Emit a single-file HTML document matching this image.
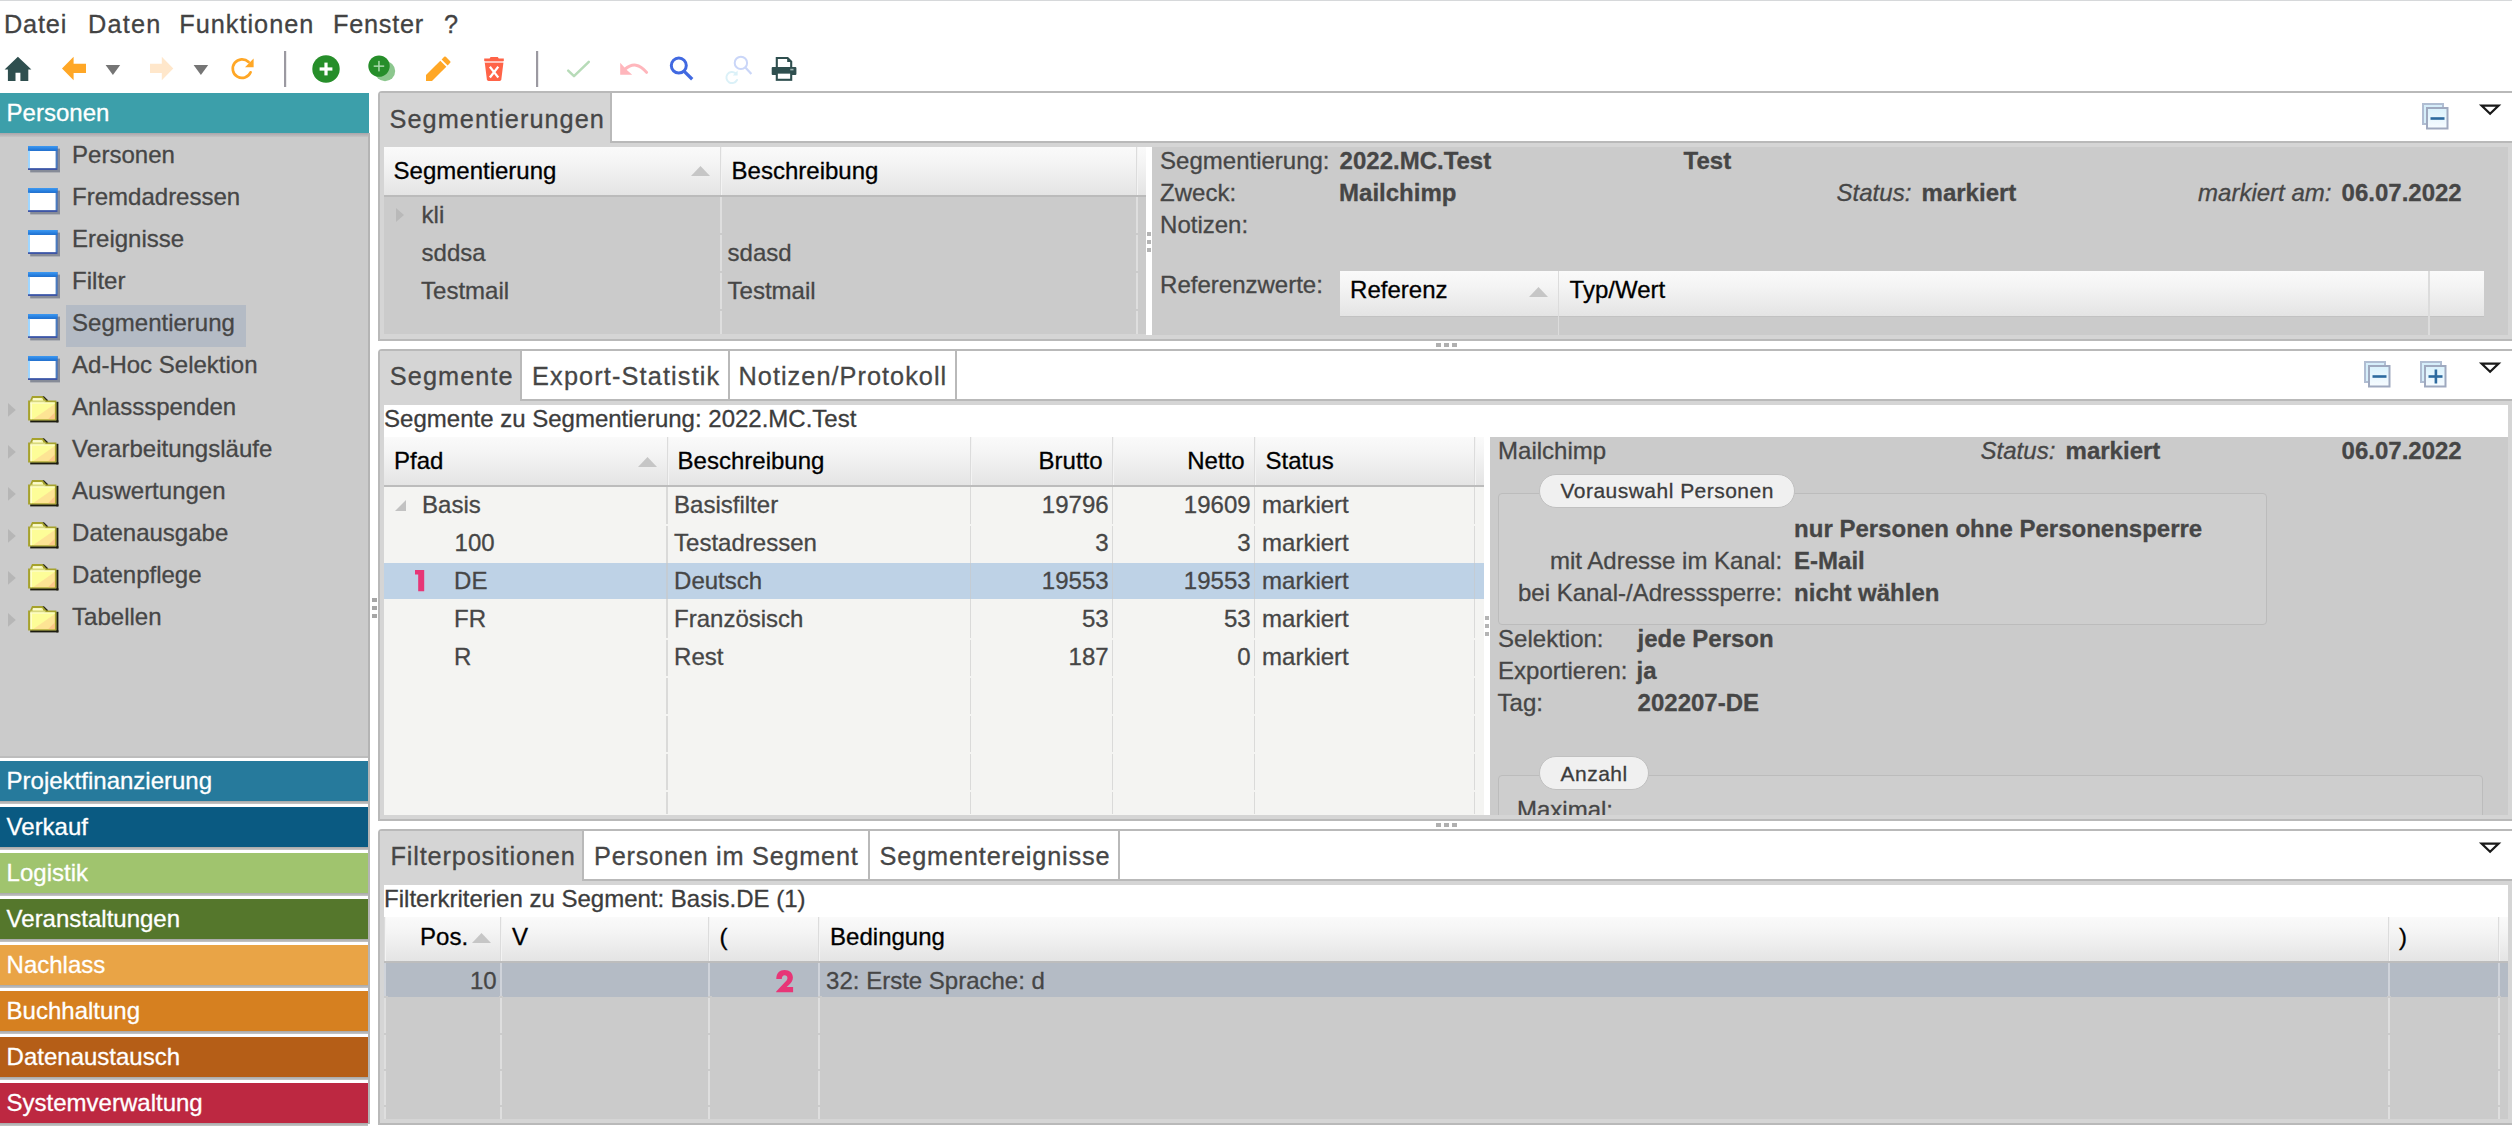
<!DOCTYPE html><html><head><meta charset="utf-8"><title>Segmentierung</title><style>
html,body{margin:0;padding:0;}
body{width:2512px;height:1131px;overflow:hidden;background:#fff;position:relative;font-family:"Liberation Sans",sans-serif;}
.t{position:absolute;white-space:pre;-webkit-text-stroke:0.3px currentColor;}
.r{position:absolute;}
svg{position:absolute;overflow:visible;}
.hd{background:linear-gradient(#fafafa 0%,#f4f4f4 35%,#e4e4e4 100%);}
</style></head><body>
<div class="r" style="left:0px;top:0px;width:2512px;height:1px;background:#d6d8da;"></div>
<span class="t" style="top:12.28px;font-size:25.3px;color:#434343;left:4.00px;letter-spacing:0.82px;line-height:25.3px;">Datei</span>
<span class="t" style="top:12.28px;font-size:25.3px;color:#434343;left:88.00px;letter-spacing:1.22px;line-height:25.3px;">Daten</span>
<span class="t" style="top:12.28px;font-size:25.3px;color:#434343;left:179.20px;letter-spacing:1.0px;line-height:25.3px;">Funktionen</span>
<span class="t" style="top:12.28px;font-size:25.3px;color:#434343;left:333.00px;letter-spacing:0.75px;line-height:25.3px;">Fenster</span>
<span class="t" style="top:12.28px;font-size:25.3px;color:#434343;left:444.00px;line-height:25.3px;">?</span>
<svg style="left:0;top:48px" width="820" height="44" viewBox="0 48 820 44">
<!-- home -->
<path d="M17.9 56.8 L31.4 69.4 L28.3 69.4 L28.3 81 L20.4 81 L20.4 72.8 L15.5 72.8 L15.5 81 L7.9 81 L7.9 69.4 L4.6 69.4 Z" fill="#2f4f4f"/>
<!-- back arrow -->
<path d="M62 68.4 L73.6 56.8 L73.6 63.8 L86 63.8 L86 72.9 L73.6 72.9 L73.6 80.2 Z" fill="#ffa726"/>
<path d="M105.6 65 L120.2 65 L112.9 75 Z" fill="#757575"/>
<!-- forward arrow (disabled) -->
<path d="M173.3 68.4 L161.8 56.8 L161.8 63.8 L150 63.8 L150 72.9 L161.8 72.9 L161.8 80.2 Z" fill="#ffe7cb"/>
<path d="M193.6 65 L208.2 65 L200.9 75 Z" fill="#757575"/>
<!-- refresh -->
<path d="M248.6 62.0 A9.3 9.3 0 1 0 250.6 72.3" fill="none" stroke="#ffa726" stroke-width="2.7" stroke-linecap="round"/>
<path d="M253.6 58.6 L253.6 67.2 L245.0 67.2 Z" fill="#ffa726"/>
<!-- separators -->
<rect x="284" y="51" width="2.2" height="36" fill="#9b99a1"/>
<rect x="536" y="51" width="2.2" height="36" fill="#9b99a1"/>
<!-- green plus -->
<circle cx="326" cy="69" r="13.7" fill="#268e2a"/>
<rect x="319.6" y="67.4" width="12.8" height="3.2" fill="#fff"/><rect x="324.4" y="62.6" width="3.2" height="12.8" fill="#fff"/>
<!-- green copy plus -->
<circle cx="385" cy="71.1" r="10.2" fill="#8cc78e"/>
<circle cx="379" cy="66.1" r="10.7" fill="#268e2a"/>
<rect x="373.7" y="65.4" width="10.5" height="1.5" fill="#a9d7ab"/><rect x="378.2" y="60.9" width="1.5" height="10.5" fill="#a9d7ab"/>
<!-- pencil -->
<path d="M426 81 L426 75 L440.3 60.7 L446.3 66.7 L432 81 Z" fill="#ffa726"/>
<path d="M441.6 59.4 L444.2 56.8 Q445 56 445.8 56.8 L450.2 61.2 Q451 62 450.2 62.8 L447.6 65.4 Z" fill="#ffa726"/>
<!-- trash -->
<path d="M490.6 56.9 L497.8 56.9 L498.8 58.6 L503.8 58.6 L503.8 61 L484.2 61 L484.2 58.6 L489.6 58.6 Z" fill="#ff6347"/>
<rect x="484.6" y="61" width="18.8" height="2.1" fill="#ffc4bb"/>
<path d="M484.8 63.1 L503.4 63.1 L501.3 79.6 Q501.1 81 499.7 81 L488.5 81 Q487.1 81 486.9 79.6 Z" fill="#ff6347"/>
<path d="M490.6 67.6 L497.6 76.6 M497.6 67.6 L490.6 76.6" stroke="#fff" stroke-width="2.3" stroke-linecap="square"/>
<!-- check -->
<path d="M568.2 70.6 L574 76.2 L588.8 61.9" fill="none" stroke="#b7dbb8" stroke-width="2.5" stroke-linecap="round" stroke-linejoin="round"/>
<!-- undo -->
<path d="M620.2 62.8 L620.2 74.8 L632.2 74.8 L626.8 70 Z" fill="#ffb6bc"/>
<path d="M625 69.2 Q636 59.5 646.6 72.4" fill="none" stroke="#ffb6bc" stroke-width="3" stroke-linecap="round"/>
<!-- search -->
<circle cx="678.8" cy="65.6" r="7.5" fill="none" stroke="#4169e1" stroke-width="3"/>
<path d="M684.2 71.4 L692.2 79.2" stroke="#4169e1" stroke-width="3.3" stroke-linecap="butt"/>
<!-- search refresh (disabled) -->
<circle cx="740.9" cy="62.9" r="6.2" fill="none" stroke="#cad6f8" stroke-width="2"/>
<path d="M745.4 67.6 L751.4 74" stroke="#cad6f8" stroke-width="2.2"/>
<path d="M735.6 73.2 A5.6 5.6 0 1 0 737 80" fill="none" stroke="#dbf1f8" stroke-width="2" stroke-linecap="round"/>
<path d="M737.6 70.6 L737.6 75.6 L732.8 75.6 Z" fill="#dbf1f8"/>
<!-- printer -->
<path d="M776.8 58 L787.6 58 L791.2 61.6 L791.2 68 L776.8 68 Z" fill="#fff" stroke="#2f4f4f" stroke-width="2.1"/>
<path d="M787.2 57.6 L787.2 62 L791.6 62 Z" fill="#2f4f4f"/>
<rect x="771.7" y="67.1" width="24.7" height="7.8" rx="1" fill="#2f4f4f"/>
<rect x="776.8" y="72.6" width="14.4" height="7.2" fill="#fff" stroke="#2f4f4f" stroke-width="2.1"/>
<rect x="790.3" y="68.8" width="3.2" height="1.6" fill="#9fb3b3"/>
</svg>

<div class="r" style="left:0px;top:93px;width:368.7px;height:40px;background:#3c9faa;"></div>
<div class="r" style="left:0px;top:133px;width:368px;height:4px;background:linear-gradient(#a9a5aa,#c4c4c4);"></div>
<div class="r" style="left:0px;top:137px;width:368px;height:619px;background:#cbcbcb;"></div>
<div class="r" style="left:0px;top:756px;width:368px;height:2px;background:#bdbdbd;"></div>
<div class="r" style="left:368px;top:133px;width:2px;height:991px;background:#b4b4b4;"></div>
<span class="t" style="top:100.88px;font-size:24px;color:#fff;left:6.60px;line-height:24px;">Personen</span>
<div class="r" style="left:66px;top:305px;width:180px;height:42px;background:#b4bbc5;"></div>
<span class="t" style="top:143.13px;font-size:24px;color:#464646;left:72.10px;line-height:24px;">Personen</span>
<svg style="left:28px;top:145.6px" width="33" height="27" viewBox="0 0 33 27"><defs><linearGradient id="wt" x1="0" y1="0" x2="0" y2="1"><stop offset="0" stop-color="#3e9af2"/><stop offset="1" stop-color="#1a6fd2"/></linearGradient></defs><rect x="2.2" y="2.6" width="29.8" height="23.8" fill="#5c6478" opacity="0.62"/><rect x="0" y="0" width="29.4" height="24" fill="#3f55a6"/><rect x="0" y="0" width="29.4" height="22.2" fill="#4a7cc0"/><rect x="0" y="0" width="29.4" height="4.8" fill="url(#wt)"/><rect x="0" y="4.8" width="2.1" height="17.4" fill="#9fd6ff"/><rect x="2" y="5" width="25.6" height="17.1" fill="#fff"/></svg>
<span class="t" style="top:185.13px;font-size:24px;color:#464646;left:72.10px;line-height:24px;">Fremdadressen</span>
<svg style="left:28px;top:187.6px" width="33" height="27" viewBox="0 0 33 27"><defs><linearGradient id="wt" x1="0" y1="0" x2="0" y2="1"><stop offset="0" stop-color="#3e9af2"/><stop offset="1" stop-color="#1a6fd2"/></linearGradient></defs><rect x="2.2" y="2.6" width="29.8" height="23.8" fill="#5c6478" opacity="0.62"/><rect x="0" y="0" width="29.4" height="24" fill="#3f55a6"/><rect x="0" y="0" width="29.4" height="22.2" fill="#4a7cc0"/><rect x="0" y="0" width="29.4" height="4.8" fill="url(#wt)"/><rect x="0" y="4.8" width="2.1" height="17.4" fill="#9fd6ff"/><rect x="2" y="5" width="25.6" height="17.1" fill="#fff"/></svg>
<span class="t" style="top:227.13px;font-size:24px;color:#464646;left:72.10px;line-height:24px;">Ereignisse</span>
<svg style="left:28px;top:229.6px" width="33" height="27" viewBox="0 0 33 27"><defs><linearGradient id="wt" x1="0" y1="0" x2="0" y2="1"><stop offset="0" stop-color="#3e9af2"/><stop offset="1" stop-color="#1a6fd2"/></linearGradient></defs><rect x="2.2" y="2.6" width="29.8" height="23.8" fill="#5c6478" opacity="0.62"/><rect x="0" y="0" width="29.4" height="24" fill="#3f55a6"/><rect x="0" y="0" width="29.4" height="22.2" fill="#4a7cc0"/><rect x="0" y="0" width="29.4" height="4.8" fill="url(#wt)"/><rect x="0" y="4.8" width="2.1" height="17.4" fill="#9fd6ff"/><rect x="2" y="5" width="25.6" height="17.1" fill="#fff"/></svg>
<span class="t" style="top:269.13px;font-size:24px;color:#464646;left:72.10px;line-height:24px;">Filter</span>
<svg style="left:28px;top:271.6px" width="33" height="27" viewBox="0 0 33 27"><defs><linearGradient id="wt" x1="0" y1="0" x2="0" y2="1"><stop offset="0" stop-color="#3e9af2"/><stop offset="1" stop-color="#1a6fd2"/></linearGradient></defs><rect x="2.2" y="2.6" width="29.8" height="23.8" fill="#5c6478" opacity="0.62"/><rect x="0" y="0" width="29.4" height="24" fill="#3f55a6"/><rect x="0" y="0" width="29.4" height="22.2" fill="#4a7cc0"/><rect x="0" y="0" width="29.4" height="4.8" fill="url(#wt)"/><rect x="0" y="4.8" width="2.1" height="17.4" fill="#9fd6ff"/><rect x="2" y="5" width="25.6" height="17.1" fill="#fff"/></svg>
<span class="t" style="top:311.13px;font-size:24px;color:#464646;left:72.10px;line-height:24px;">Segmentierung</span>
<svg style="left:28px;top:313.6px" width="33" height="27" viewBox="0 0 33 27"><defs><linearGradient id="wt" x1="0" y1="0" x2="0" y2="1"><stop offset="0" stop-color="#3e9af2"/><stop offset="1" stop-color="#1a6fd2"/></linearGradient></defs><rect x="2.2" y="2.6" width="29.8" height="23.8" fill="#5c6478" opacity="0.62"/><rect x="0" y="0" width="29.4" height="24" fill="#3f55a6"/><rect x="0" y="0" width="29.4" height="22.2" fill="#4a7cc0"/><rect x="0" y="0" width="29.4" height="4.8" fill="url(#wt)"/><rect x="0" y="4.8" width="2.1" height="17.4" fill="#9fd6ff"/><rect x="2" y="5" width="25.6" height="17.1" fill="#fff"/></svg>
<span class="t" style="top:353.13px;font-size:24px;color:#464646;left:72.10px;line-height:24px;">Ad-Hoc Selektion</span>
<svg style="left:28px;top:355.6px" width="33" height="27" viewBox="0 0 33 27"><defs><linearGradient id="wt" x1="0" y1="0" x2="0" y2="1"><stop offset="0" stop-color="#3e9af2"/><stop offset="1" stop-color="#1a6fd2"/></linearGradient></defs><rect x="2.2" y="2.6" width="29.8" height="23.8" fill="#5c6478" opacity="0.62"/><rect x="0" y="0" width="29.4" height="24" fill="#3f55a6"/><rect x="0" y="0" width="29.4" height="22.2" fill="#4a7cc0"/><rect x="0" y="0" width="29.4" height="4.8" fill="url(#wt)"/><rect x="0" y="4.8" width="2.1" height="17.4" fill="#9fd6ff"/><rect x="2" y="5" width="25.6" height="17.1" fill="#fff"/></svg>
<span class="t" style="top:395.13px;font-size:24px;color:#464646;left:72.10px;line-height:24px;">Anlassspenden</span>
<svg style="left:27.8px;top:395.6px" width="31" height="27" viewBox="0 0 31 27"><rect x="2.2" y="24.2" width="28.2" height="2.2" fill="#1c1c10"/><rect x="28.3" y="5.8" width="2.1" height="20.6" fill="#1c1c10"/><path d="M13.8 0.2 L16 0.2 L20.4 4.6 L17.6 5.8 Z" fill="#24241a"/><path d="M0.1 4.4 L2 4.4 L4 0 L14.4 0 L18.4 4.4 L28.4 4.4 L28.4 24.6 L0.1 24.6 Z" fill="#a6a22c"/><path d="M2.4 6.4 L4.4 6.4 L5.2 2 L14 2 L16.4 6.4 L26.8 6.4 L26.8 23.2 L2.4 23.2 Z" fill="#fdfd98"/><path d="M4.4 4.6 L5.2 2 L14 2 L15.4 4.6 Z" fill="#f4f4b4"/><rect x="4.6" y="2.6" width="8.6" height="1.2" fill="#fcfcd8"/><rect x="2.4" y="4.6" width="15" height="1.9" fill="#d8d880"/><rect x="2.4" y="6.4" width="1.4" height="16.8" fill="#ffffd6"/><rect x="2.4" y="6.4" width="24.4" height="1.2" fill="#fefed0"/><path d="M26.8 8 L26.8 23.2 L5 23.2 Z" fill="#fdc090" opacity="0.42"/><path d="M26.8 16.5 L26.8 23.2 L20 23.2 Z" fill="#fdb080" opacity="0.55"/></svg>
<svg style="left:8px;top:403px" width="8" height="14" viewBox="0 0 8 14"><path d="M0 0 L7.8 6.9 L0 13.8 Z" fill="#b6b6b6"/></svg>
<span class="t" style="top:437.13px;font-size:24px;color:#464646;left:72.10px;line-height:24px;">Verarbeitungsläufe</span>
<svg style="left:27.8px;top:437.6px" width="31" height="27" viewBox="0 0 31 27"><rect x="2.2" y="24.2" width="28.2" height="2.2" fill="#1c1c10"/><rect x="28.3" y="5.8" width="2.1" height="20.6" fill="#1c1c10"/><path d="M13.8 0.2 L16 0.2 L20.4 4.6 L17.6 5.8 Z" fill="#24241a"/><path d="M0.1 4.4 L2 4.4 L4 0 L14.4 0 L18.4 4.4 L28.4 4.4 L28.4 24.6 L0.1 24.6 Z" fill="#a6a22c"/><path d="M2.4 6.4 L4.4 6.4 L5.2 2 L14 2 L16.4 6.4 L26.8 6.4 L26.8 23.2 L2.4 23.2 Z" fill="#fdfd98"/><path d="M4.4 4.6 L5.2 2 L14 2 L15.4 4.6 Z" fill="#f4f4b4"/><rect x="4.6" y="2.6" width="8.6" height="1.2" fill="#fcfcd8"/><rect x="2.4" y="4.6" width="15" height="1.9" fill="#d8d880"/><rect x="2.4" y="6.4" width="1.4" height="16.8" fill="#ffffd6"/><rect x="2.4" y="6.4" width="24.4" height="1.2" fill="#fefed0"/><path d="M26.8 8 L26.8 23.2 L5 23.2 Z" fill="#fdc090" opacity="0.42"/><path d="M26.8 16.5 L26.8 23.2 L20 23.2 Z" fill="#fdb080" opacity="0.55"/></svg>
<svg style="left:8px;top:445px" width="8" height="14" viewBox="0 0 8 14"><path d="M0 0 L7.8 6.9 L0 13.8 Z" fill="#b6b6b6"/></svg>
<span class="t" style="top:479.13px;font-size:24px;color:#464646;left:72.10px;line-height:24px;">Auswertungen</span>
<svg style="left:27.8px;top:479.6px" width="31" height="27" viewBox="0 0 31 27"><rect x="2.2" y="24.2" width="28.2" height="2.2" fill="#1c1c10"/><rect x="28.3" y="5.8" width="2.1" height="20.6" fill="#1c1c10"/><path d="M13.8 0.2 L16 0.2 L20.4 4.6 L17.6 5.8 Z" fill="#24241a"/><path d="M0.1 4.4 L2 4.4 L4 0 L14.4 0 L18.4 4.4 L28.4 4.4 L28.4 24.6 L0.1 24.6 Z" fill="#a6a22c"/><path d="M2.4 6.4 L4.4 6.4 L5.2 2 L14 2 L16.4 6.4 L26.8 6.4 L26.8 23.2 L2.4 23.2 Z" fill="#fdfd98"/><path d="M4.4 4.6 L5.2 2 L14 2 L15.4 4.6 Z" fill="#f4f4b4"/><rect x="4.6" y="2.6" width="8.6" height="1.2" fill="#fcfcd8"/><rect x="2.4" y="4.6" width="15" height="1.9" fill="#d8d880"/><rect x="2.4" y="6.4" width="1.4" height="16.8" fill="#ffffd6"/><rect x="2.4" y="6.4" width="24.4" height="1.2" fill="#fefed0"/><path d="M26.8 8 L26.8 23.2 L5 23.2 Z" fill="#fdc090" opacity="0.42"/><path d="M26.8 16.5 L26.8 23.2 L20 23.2 Z" fill="#fdb080" opacity="0.55"/></svg>
<svg style="left:8px;top:487px" width="8" height="14" viewBox="0 0 8 14"><path d="M0 0 L7.8 6.9 L0 13.8 Z" fill="#b6b6b6"/></svg>
<span class="t" style="top:521.13px;font-size:24px;color:#464646;left:72.10px;line-height:24px;">Datenausgabe</span>
<svg style="left:27.8px;top:521.6px" width="31" height="27" viewBox="0 0 31 27"><rect x="2.2" y="24.2" width="28.2" height="2.2" fill="#1c1c10"/><rect x="28.3" y="5.8" width="2.1" height="20.6" fill="#1c1c10"/><path d="M13.8 0.2 L16 0.2 L20.4 4.6 L17.6 5.8 Z" fill="#24241a"/><path d="M0.1 4.4 L2 4.4 L4 0 L14.4 0 L18.4 4.4 L28.4 4.4 L28.4 24.6 L0.1 24.6 Z" fill="#a6a22c"/><path d="M2.4 6.4 L4.4 6.4 L5.2 2 L14 2 L16.4 6.4 L26.8 6.4 L26.8 23.2 L2.4 23.2 Z" fill="#fdfd98"/><path d="M4.4 4.6 L5.2 2 L14 2 L15.4 4.6 Z" fill="#f4f4b4"/><rect x="4.6" y="2.6" width="8.6" height="1.2" fill="#fcfcd8"/><rect x="2.4" y="4.6" width="15" height="1.9" fill="#d8d880"/><rect x="2.4" y="6.4" width="1.4" height="16.8" fill="#ffffd6"/><rect x="2.4" y="6.4" width="24.4" height="1.2" fill="#fefed0"/><path d="M26.8 8 L26.8 23.2 L5 23.2 Z" fill="#fdc090" opacity="0.42"/><path d="M26.8 16.5 L26.8 23.2 L20 23.2 Z" fill="#fdb080" opacity="0.55"/></svg>
<svg style="left:8px;top:529px" width="8" height="14" viewBox="0 0 8 14"><path d="M0 0 L7.8 6.9 L0 13.8 Z" fill="#b6b6b6"/></svg>
<span class="t" style="top:563.13px;font-size:24px;color:#464646;left:72.10px;line-height:24px;">Datenpflege</span>
<svg style="left:27.8px;top:563.6px" width="31" height="27" viewBox="0 0 31 27"><rect x="2.2" y="24.2" width="28.2" height="2.2" fill="#1c1c10"/><rect x="28.3" y="5.8" width="2.1" height="20.6" fill="#1c1c10"/><path d="M13.8 0.2 L16 0.2 L20.4 4.6 L17.6 5.8 Z" fill="#24241a"/><path d="M0.1 4.4 L2 4.4 L4 0 L14.4 0 L18.4 4.4 L28.4 4.4 L28.4 24.6 L0.1 24.6 Z" fill="#a6a22c"/><path d="M2.4 6.4 L4.4 6.4 L5.2 2 L14 2 L16.4 6.4 L26.8 6.4 L26.8 23.2 L2.4 23.2 Z" fill="#fdfd98"/><path d="M4.4 4.6 L5.2 2 L14 2 L15.4 4.6 Z" fill="#f4f4b4"/><rect x="4.6" y="2.6" width="8.6" height="1.2" fill="#fcfcd8"/><rect x="2.4" y="4.6" width="15" height="1.9" fill="#d8d880"/><rect x="2.4" y="6.4" width="1.4" height="16.8" fill="#ffffd6"/><rect x="2.4" y="6.4" width="24.4" height="1.2" fill="#fefed0"/><path d="M26.8 8 L26.8 23.2 L5 23.2 Z" fill="#fdc090" opacity="0.42"/><path d="M26.8 16.5 L26.8 23.2 L20 23.2 Z" fill="#fdb080" opacity="0.55"/></svg>
<svg style="left:8px;top:571px" width="8" height="14" viewBox="0 0 8 14"><path d="M0 0 L7.8 6.9 L0 13.8 Z" fill="#b6b6b6"/></svg>
<span class="t" style="top:605.13px;font-size:24px;color:#464646;left:72.10px;line-height:24px;">Tabellen</span>
<svg style="left:27.8px;top:605.6px" width="31" height="27" viewBox="0 0 31 27"><rect x="2.2" y="24.2" width="28.2" height="2.2" fill="#1c1c10"/><rect x="28.3" y="5.8" width="2.1" height="20.6" fill="#1c1c10"/><path d="M13.8 0.2 L16 0.2 L20.4 4.6 L17.6 5.8 Z" fill="#24241a"/><path d="M0.1 4.4 L2 4.4 L4 0 L14.4 0 L18.4 4.4 L28.4 4.4 L28.4 24.6 L0.1 24.6 Z" fill="#a6a22c"/><path d="M2.4 6.4 L4.4 6.4 L5.2 2 L14 2 L16.4 6.4 L26.8 6.4 L26.8 23.2 L2.4 23.2 Z" fill="#fdfd98"/><path d="M4.4 4.6 L5.2 2 L14 2 L15.4 4.6 Z" fill="#f4f4b4"/><rect x="4.6" y="2.6" width="8.6" height="1.2" fill="#fcfcd8"/><rect x="2.4" y="4.6" width="15" height="1.9" fill="#d8d880"/><rect x="2.4" y="6.4" width="1.4" height="16.8" fill="#ffffd6"/><rect x="2.4" y="6.4" width="24.4" height="1.2" fill="#fefed0"/><path d="M26.8 8 L26.8 23.2 L5 23.2 Z" fill="#fdc090" opacity="0.42"/><path d="M26.8 16.5 L26.8 23.2 L20 23.2 Z" fill="#fdb080" opacity="0.55"/></svg>
<svg style="left:8px;top:613px" width="8" height="14" viewBox="0 0 8 14"><path d="M0 0 L7.8 6.9 L0 13.8 Z" fill="#b6b6b6"/></svg>
<div class="r" style="left:0px;top:761px;width:368px;height:40px;background:#267a9c;"></div>
<div class="r" style="left:0px;top:801px;width:368px;height:3px;background:linear-gradient(#a8a8a8,#c6c6c6);"></div>
<span class="t" style="top:769.18px;font-size:24px;color:#fff;left:6.60px;line-height:24px;">Projektfinanzierung</span>
<div class="r" style="left:0px;top:807px;width:368px;height:40px;background:#0a5a82;"></div>
<div class="r" style="left:0px;top:847px;width:368px;height:3px;background:linear-gradient(#a8a8a8,#c6c6c6);"></div>
<span class="t" style="top:815.18px;font-size:24px;color:#fff;left:6.60px;line-height:24px;">Verkauf</span>
<div class="r" style="left:0px;top:853px;width:368px;height:40px;background:#a0c46e;"></div>
<div class="r" style="left:0px;top:893px;width:368px;height:3px;background:linear-gradient(#a8a8a8,#c6c6c6);"></div>
<span class="t" style="top:861.18px;font-size:24px;color:#fff;left:6.60px;line-height:24px;">Logistik</span>
<div class="r" style="left:0px;top:899px;width:368px;height:40px;background:#55772c;"></div>
<div class="r" style="left:0px;top:939px;width:368px;height:3px;background:linear-gradient(#a8a8a8,#c6c6c6);"></div>
<span class="t" style="top:907.18px;font-size:24px;color:#fff;left:6.60px;line-height:24px;">Veranstaltungen</span>
<div class="r" style="left:0px;top:945px;width:368px;height:40px;background:#e9a446;"></div>
<div class="r" style="left:0px;top:985px;width:368px;height:3px;background:linear-gradient(#a8a8a8,#c6c6c6);"></div>
<span class="t" style="top:953.18px;font-size:24px;color:#fff;left:6.60px;line-height:24px;">Nachlass</span>
<div class="r" style="left:0px;top:991px;width:368px;height:40px;background:#d68020;"></div>
<div class="r" style="left:0px;top:1031px;width:368px;height:3px;background:linear-gradient(#a8a8a8,#c6c6c6);"></div>
<span class="t" style="top:999.18px;font-size:24px;color:#fff;left:6.60px;line-height:24px;">Buchhaltung</span>
<div class="r" style="left:0px;top:1037px;width:368px;height:40px;background:#b55e17;"></div>
<div class="r" style="left:0px;top:1077px;width:368px;height:3px;background:linear-gradient(#a8a8a8,#c6c6c6);"></div>
<span class="t" style="top:1045.18px;font-size:24px;color:#fff;left:6.60px;line-height:24px;">Datenaustausch</span>
<div class="r" style="left:0px;top:1083px;width:368px;height:40px;background:#bd2841;"></div>
<div class="r" style="left:0px;top:1123px;width:368px;height:3px;background:linear-gradient(#a8a8a8,#c6c6c6);"></div>
<span class="t" style="top:1091.18px;font-size:24px;color:#fff;left:6.60px;line-height:24px;">Systemverwaltung</span>
<div class="r" style="left:371.5px;top:598px;width:5px;height:4px;background:#a6a6a6;"></div>
<div class="r" style="left:371.5px;top:606px;width:5px;height:4px;background:#a6a6a6;"></div>
<div class="r" style="left:371.5px;top:614px;width:5px;height:4px;background:#a6a6a6;"></div>
<div class="r" style="left:378px;top:91px;width:2140px;height:246px;border:2px solid #b9b9b9;border-radius:4px 0 0 0;background:#d5d5d5;"></div>
<div class="r" style="left:380px;top:93px;width:231px;height:50px;background:#d5d5d5;"></div>
<div class="r" style="left:609.5px;top:93px;width:2px;height:50px;background:#b9b9b9;"></div>
<span class="t" style="top:106.78px;font-size:25.3px;color:#464646;left:389.60px;letter-spacing:1.043px;line-height:25.3px;">Segmentierungen</span>
<div class="r" style="left:611.5px;top:93px;width:1900.5px;height:48px;background:#fff;"></div>
<div class="r" style="left:609.5px;top:141px;width:1902.5px;height:2px;background:#b9b9b9;"></div>
<div class="r" style="left:378px;top:349px;width:2140px;height:468px;border:2px solid #b9b9b9;border-radius:4px 0 0 0;background:#d5d5d5;"></div>
<div class="r" style="left:380px;top:351px;width:141.5px;height:50px;background:#d5d5d5;"></div>
<div class="r" style="left:520.0px;top:351px;width:2px;height:50px;background:#b9b9b9;"></div>
<span class="t" style="top:364.03px;font-size:25.3px;color:#464646;left:389.80px;letter-spacing:1.079px;line-height:25.3px;">Segmente</span>
<div class="r" style="left:522.0px;top:351px;width:207.5px;height:48px;background:#fff;"></div>
<div class="r" style="left:728.0px;top:351px;width:2px;height:48px;background:#b9b9b9;"></div>
<span class="t" style="top:364.03px;font-size:25.3px;color:#464646;left:532.10px;letter-spacing:1.133px;line-height:25.3px;">Export-Statistik</span>
<div class="r" style="left:730.0px;top:351px;width:226.5px;height:48px;background:#fff;"></div>
<div class="r" style="left:955.0px;top:351px;width:2px;height:48px;background:#b9b9b9;"></div>
<span class="t" style="top:364.03px;font-size:25.3px;color:#464646;left:738.50px;letter-spacing:1.03px;line-height:25.3px;">Notizen/Protokoll</span>
<div class="r" style="left:957.0px;top:351px;width:1555.0px;height:48px;background:#fff;"></div>
<div class="r" style="left:520.0px;top:399px;width:1992.0px;height:2px;background:#b9b9b9;"></div>
<div class="r" style="left:378px;top:829px;width:2140px;height:291.5px;border:2px solid #b9b9b9;border-radius:4px 0 0 0;background:#d5d5d5;"></div>
<div class="r" style="left:380px;top:831px;width:203.5px;height:50px;background:#d5d5d5;"></div>
<div class="r" style="left:582.0px;top:831px;width:2px;height:50px;background:#b9b9b9;"></div>
<span class="t" style="top:844.03px;font-size:25.3px;color:#464646;left:390.40px;letter-spacing:0.86px;line-height:25.3px;">Filterpositionen</span>
<div class="r" style="left:584.0px;top:831px;width:285.5px;height:48px;background:#fff;"></div>
<div class="r" style="left:868.0px;top:831px;width:2px;height:48px;background:#b9b9b9;"></div>
<span class="t" style="top:844.03px;font-size:25.3px;color:#464646;left:594.10px;letter-spacing:0.744px;line-height:25.3px;">Personen im Segment</span>
<div class="r" style="left:870.0px;top:831px;width:249.5px;height:48px;background:#fff;"></div>
<div class="r" style="left:1118.0px;top:831px;width:2px;height:48px;background:#b9b9b9;"></div>
<span class="t" style="top:844.03px;font-size:25.3px;color:#464646;left:879.50px;letter-spacing:0.85px;line-height:25.3px;">Segmentereignisse</span>
<div class="r" style="left:1120.0px;top:831px;width:1392.0px;height:48px;background:#fff;"></div>
<div class="r" style="left:582.0px;top:879px;width:1930.0px;height:2px;background:#b9b9b9;"></div>
<div class="r" style="left:1436px;top:343px;width:5px;height:4px;background:#b0b0b0;"></div>
<div class="r" style="left:1444px;top:343px;width:5px;height:4px;background:#b0b0b0;"></div>
<div class="r" style="left:1452px;top:343px;width:5px;height:4px;background:#b0b0b0;"></div>
<div class="r" style="left:1436px;top:823px;width:5px;height:4px;background:#b0b0b0;"></div>
<div class="r" style="left:1444px;top:823px;width:5px;height:4px;background:#b0b0b0;"></div>
<div class="r" style="left:1452px;top:823px;width:5px;height:4px;background:#b0b0b0;"></div>
<svg style="left:2479px;top:104px" width="22" height="13" viewBox="0 0 22 13"><path d="M2.6 1.6 L19.6 1.6 L11.1 9.8 Z" fill="none" stroke="#1a1a1a" stroke-width="2.2" stroke-linejoin="miter"/></svg>
<svg style="left:2421.5px;top:102.5px" width="27" height="27" viewBox="0 0 27 27"><defs><linearGradient id="g2421.5102.5" x1="0" y1="0" x2="0" y2="1"><stop offset="0" stop-color="#d9f1fc"/><stop offset="1" stop-color="#f7fcff"/></linearGradient></defs><rect x="1" y="1" width="20" height="20" fill="#d6eefa" stroke="#b0bdd2" stroke-width="2"/><rect x="5" y="5" width="20.5" height="20.5" fill="url(#g2421.5102.5)" stroke="#9fa9bf" stroke-width="2"/><rect x="8.5" y="14.2" width="14" height="2.6" fill="#2d6a9f"/></svg>
<svg style="left:2479px;top:362px" width="22" height="13" viewBox="0 0 22 13"><path d="M2.6 1.6 L19.6 1.6 L11.1 9.8 Z" fill="none" stroke="#1a1a1a" stroke-width="2.2" stroke-linejoin="miter"/></svg>
<svg style="left:2363.5px;top:360.5px" width="27" height="27" viewBox="0 0 27 27"><defs><linearGradient id="g2363.5360.5" x1="0" y1="0" x2="0" y2="1"><stop offset="0" stop-color="#d9f1fc"/><stop offset="1" stop-color="#f7fcff"/></linearGradient></defs><rect x="1" y="1" width="20" height="20" fill="#d6eefa" stroke="#b0bdd2" stroke-width="2"/><rect x="5" y="5" width="20.5" height="20.5" fill="url(#g2363.5360.5)" stroke="#9fa9bf" stroke-width="2"/><rect x="8.5" y="14.2" width="14" height="2.6" fill="#2d6a9f"/></svg>
<svg style="left:2419.5px;top:360.5px" width="27" height="27" viewBox="0 0 27 27"><defs><linearGradient id="g2419.5360.5" x1="0" y1="0" x2="0" y2="1"><stop offset="0" stop-color="#d9f1fc"/><stop offset="1" stop-color="#f7fcff"/></linearGradient></defs><rect x="1" y="1" width="20" height="20" fill="#d6eefa" stroke="#b0bdd2" stroke-width="2"/><rect x="5" y="5" width="20.5" height="20.5" fill="url(#g2419.5360.5)" stroke="#9fa9bf" stroke-width="2"/><rect x="8.5" y="14.2" width="14" height="2.6" fill="#2d6a9f"/><rect x="14.6" y="8.5" width="2.6" height="14" fill="#2d6a9f"/></svg>
<svg style="left:2479px;top:842px" width="22" height="13" viewBox="0 0 22 13"><path d="M2.6 1.6 L19.6 1.6 L11.1 9.8 Z" fill="none" stroke="#1a1a1a" stroke-width="2.2" stroke-linejoin="miter"/></svg>
<div class="r" style="left:384px;top:147px;width:762px;height:48px;background:;background:linear-gradient(#fafafa 0%,#f4f4f4 35%,#e4e4e4 100%)"></div>
<div class="r" style="left:384px;top:194.7px;width:762px;height:2.2px;background:#bbbbbb;"></div>
<div class="r" style="left:384px;top:196.9px;width:762px;height:137.6px;background:#cbcbcb;"></div>
<div class="r" style="left:720px;top:196.9px;width:2px;height:137.6px;background:#dedede;"></div>
<div class="r" style="left:720px;top:147px;width:1px;height:47.7px;background:#dcdcdc;"></div>
<div class="r" style="left:721px;top:147px;width:1px;height:47.7px;background:#f3f3f3;"></div>
<div class="r" style="left:1136px;top:196.9px;width:2px;height:137.6px;background:#dedede;"></div>
<div class="r" style="left:1136px;top:147px;width:1px;height:47.7px;background:#dcdcdc;"></div>
<div class="r" style="left:1137px;top:147px;width:1px;height:47.7px;background:#f3f3f3;"></div>
<div class="r" style="left:719px;top:233px;width:4px;height:2px;background:#cbcbcb;"></div>
<div class="r" style="left:1135px;top:233px;width:4px;height:2px;background:#cbcbcb;"></div>
<div class="r" style="left:719px;top:271px;width:4px;height:2px;background:#cbcbcb;"></div>
<div class="r" style="left:1135px;top:271px;width:4px;height:2px;background:#cbcbcb;"></div>
<div class="r" style="left:719px;top:309px;width:4px;height:2px;background:#cbcbcb;"></div>
<div class="r" style="left:1135px;top:309px;width:4px;height:2px;background:#cbcbcb;"></div>
<span class="t" style="top:159.13px;font-size:24px;color:#000;left:393.60px;line-height:24px;">Segmentierung</span>
<span class="t" style="top:159.13px;font-size:24px;color:#000;left:731.60px;line-height:24px;">Beschreibung</span>
<svg style="left:691px;top:166px" width="19" height="10" viewBox="0 0 19 10"><path d="M0 10 L9.5 0 L19 10 Z" fill="#c6c6c6"/></svg>
<svg style="left:396px;top:208px" width="8" height="14" viewBox="0 0 8 14"><path d="M0 0 L8 7 L0 14 Z" fill="#b9b9b9"/></svg>
<span class="t" style="top:202.88px;font-size:24px;color:#464646;left:421.60px;line-height:24px;">kli</span>
<span class="t" style="top:240.88px;font-size:24px;color:#464646;left:421.60px;line-height:24px;">sddsa</span>
<span class="t" style="top:278.88px;font-size:24px;color:#464646;left:421.10px;line-height:24px;">Testmail</span>
<span class="t" style="top:240.88px;font-size:24px;color:#464646;left:727.60px;line-height:24px;">sdasd</span>
<span class="t" style="top:278.88px;font-size:24px;color:#464646;left:727.60px;line-height:24px;">Testmail</span>
<div class="r" style="left:1146px;top:147px;width:6px;height:187.5px;background:#fff;"></div>
<div class="r" style="left:1147px;top:232px;width:4px;height:4px;background:#b4b4b4;"></div>
<div class="r" style="left:1147px;top:240px;width:4px;height:4px;background:#b4b4b4;"></div>
<div class="r" style="left:1147px;top:248px;width:4px;height:4px;background:#b4b4b4;"></div>
<div class="r" style="left:1152px;top:147px;width:1356px;height:187.5px;background:#cbcbcb;"></div>
<span class="t" style="top:149.13px;font-size:24px;color:#464646;left:1160.10px;line-height:24px;">Segmentierung:</span>
<span class="t" style="top:180.88px;font-size:24px;color:#464646;left:1160.10px;line-height:24px;">Zweck:</span>
<span class="t" style="top:212.88px;font-size:24px;color:#464646;left:1160.10px;line-height:24px;">Notizen:</span>
<span class="t" style="top:272.88px;font-size:24px;color:#464646;left:1160.10px;line-height:24px;">Referenzwerte:</span>
<span class="t" style="top:149.13px;font-size:24px;color:#464646;left:1339.60px;font-weight:700;line-height:24px;">2022.MC.Test</span>
<span class="t" style="top:149.13px;font-size:24px;color:#464646;left:1683.60px;font-weight:700;line-height:24px;">Test</span>
<span class="t" style="top:180.88px;font-size:24px;color:#464646;left:1339.10px;font-weight:700;line-height:24px;">Mailchimp</span>
<span class="t" style="top:180.88px;font-size:24px;color:#464646;left:1836.60px;font-style:italic;line-height:24px;">Status:</span>
<span class="t" style="top:180.88px;font-size:24px;color:#464646;left:1921.60px;font-weight:700;line-height:24px;">markiert</span>
<span class="t" style="top:180.88px;font-size:24px;color:#464646;left:2198.10px;font-style:italic;line-height:24px;">markiert am:</span>
<span class="t" style="top:180.88px;font-size:24px;color:#464646;left:2341.60px;font-weight:700;line-height:24px;">06.07.2022</span>
<div class="r" style="left:1339.5px;top:271px;width:1144px;height:44.5px;background:;background:linear-gradient(#fafafa 0%,#f4f4f4 35%,#e4e4e4 100%)"></div>
<div class="r" style="left:1339.5px;top:315.5px;width:1144px;height:1.5px;background:#c2c2c2;"></div>
<div class="r" style="left:1557.5px;top:271px;width:1.5px;height:63.5px;background:#dcdcdc;"></div>
<div class="r" style="left:2428px;top:271px;width:1.5px;height:63.5px;background:#dcdcdc;"></div>
<span class="t" style="top:278.38px;font-size:24px;color:#000;left:1350.10px;line-height:24px;">Referenz</span>
<span class="t" style="top:278.38px;font-size:24px;color:#000;left:1569.60px;line-height:24px;">Typ/Wert</span>
<svg style="left:1529px;top:287px" width="19" height="10" viewBox="0 0 19 10"><path d="M0 10 L9.5 0 L19 10 Z" fill="#c6c6c6"/></svg>
<div class="r" style="left:384px;top:405px;width:2124px;height:32px;background:#fff;"></div>
<span class="t" style="top:406.98px;font-size:24px;color:#3c3c3c;left:384.10px;line-height:24px;">Segmente zu Segmentierung: 2022.MC.Test</span>
<div class="r" style="left:384px;top:437px;width:1100px;height:48px;background:;background:linear-gradient(#fafafa 0%,#f4f4f4 35%,#e4e4e4 100%)"></div>
<div class="r" style="left:384px;top:484.6px;width:1100px;height:2.1px;background:#bcbcbc;"></div>
<div class="r" style="left:384px;top:486.5px;width:1100px;height:328px;background:#f4f4f2;"></div>
<div class="r" style="left:384px;top:563px;width:1100px;height:36px;background:#bed2e6;"></div>
<div class="r" style="left:666.3px;top:486.7px;width:1.6px;height:327.8px;background:rgba(200,200,200,.6);"></div>
<div class="r" style="left:666.5px;top:437px;width:1px;height:47.6px;background:#dcdcdc;"></div>
<div class="r" style="left:667.5px;top:437px;width:1px;height:47.6px;background:#f3f3f3;"></div>
<div class="r" style="left:969.8px;top:486.7px;width:1.6px;height:327.8px;background:rgba(200,200,200,.6);"></div>
<div class="r" style="left:970px;top:437px;width:1px;height:47.6px;background:#dcdcdc;"></div>
<div class="r" style="left:971px;top:437px;width:1px;height:47.6px;background:#f3f3f3;"></div>
<div class="r" style="left:1111.8px;top:486.7px;width:1.6px;height:327.8px;background:rgba(200,200,200,.6);"></div>
<div class="r" style="left:1112px;top:437px;width:1px;height:47.6px;background:#dcdcdc;"></div>
<div class="r" style="left:1113px;top:437px;width:1px;height:47.6px;background:#f3f3f3;"></div>
<div class="r" style="left:1253.8px;top:486.7px;width:1.6px;height:327.8px;background:rgba(200,200,200,.6);"></div>
<div class="r" style="left:1254px;top:437px;width:1px;height:47.6px;background:#dcdcdc;"></div>
<div class="r" style="left:1255px;top:437px;width:1px;height:47.6px;background:#f3f3f3;"></div>
<div class="r" style="left:1473.8px;top:486.7px;width:1.6px;height:327.8px;background:rgba(200,200,200,.6);"></div>
<div class="r" style="left:1474px;top:437px;width:1px;height:47.6px;background:#dcdcdc;"></div>
<div class="r" style="left:1475px;top:437px;width:1px;height:47.6px;background:#f3f3f3;"></div>
<div class="r" style="left:665.5px;top:523.5px;width:4px;height:2px;background:#f4f4f2;"></div>
<div class="r" style="left:969px;top:523.5px;width:4px;height:2px;background:#f4f4f2;"></div>
<div class="r" style="left:1111px;top:523.5px;width:4px;height:2px;background:#f4f4f2;"></div>
<div class="r" style="left:1253px;top:523.5px;width:4px;height:2px;background:#f4f4f2;"></div>
<div class="r" style="left:1473px;top:523.5px;width:4px;height:2px;background:#f4f4f2;"></div>
<div class="r" style="left:665.5px;top:637.5px;width:4px;height:2px;background:#f4f4f2;"></div>
<div class="r" style="left:969px;top:637.5px;width:4px;height:2px;background:#f4f4f2;"></div>
<div class="r" style="left:1111px;top:637.5px;width:4px;height:2px;background:#f4f4f2;"></div>
<div class="r" style="left:1253px;top:637.5px;width:4px;height:2px;background:#f4f4f2;"></div>
<div class="r" style="left:1473px;top:637.5px;width:4px;height:2px;background:#f4f4f2;"></div>
<div class="r" style="left:665.5px;top:675.5px;width:4px;height:2px;background:#f4f4f2;"></div>
<div class="r" style="left:969px;top:675.5px;width:4px;height:2px;background:#f4f4f2;"></div>
<div class="r" style="left:1111px;top:675.5px;width:4px;height:2px;background:#f4f4f2;"></div>
<div class="r" style="left:1253px;top:675.5px;width:4px;height:2px;background:#f4f4f2;"></div>
<div class="r" style="left:1473px;top:675.5px;width:4px;height:2px;background:#f4f4f2;"></div>
<div class="r" style="left:665.5px;top:713.5px;width:4px;height:2px;background:#f4f4f2;"></div>
<div class="r" style="left:969px;top:713.5px;width:4px;height:2px;background:#f4f4f2;"></div>
<div class="r" style="left:1111px;top:713.5px;width:4px;height:2px;background:#f4f4f2;"></div>
<div class="r" style="left:1253px;top:713.5px;width:4px;height:2px;background:#f4f4f2;"></div>
<div class="r" style="left:1473px;top:713.5px;width:4px;height:2px;background:#f4f4f2;"></div>
<div class="r" style="left:665.5px;top:751.5px;width:4px;height:2px;background:#f4f4f2;"></div>
<div class="r" style="left:969px;top:751.5px;width:4px;height:2px;background:#f4f4f2;"></div>
<div class="r" style="left:1111px;top:751.5px;width:4px;height:2px;background:#f4f4f2;"></div>
<div class="r" style="left:1253px;top:751.5px;width:4px;height:2px;background:#f4f4f2;"></div>
<div class="r" style="left:1473px;top:751.5px;width:4px;height:2px;background:#f4f4f2;"></div>
<div class="r" style="left:665.5px;top:789.5px;width:4px;height:2px;background:#f4f4f2;"></div>
<div class="r" style="left:969px;top:789.5px;width:4px;height:2px;background:#f4f4f2;"></div>
<div class="r" style="left:1111px;top:789.5px;width:4px;height:2px;background:#f4f4f2;"></div>
<div class="r" style="left:1253px;top:789.5px;width:4px;height:2px;background:#f4f4f2;"></div>
<div class="r" style="left:1473px;top:789.5px;width:4px;height:2px;background:#f4f4f2;"></div>
<span class="t" style="top:449.13px;font-size:24px;color:#000;left:394.10px;line-height:24px;">Pfad</span>
<span class="t" style="top:449.13px;font-size:24px;color:#000;left:677.60px;line-height:24px;">Beschreibung</span>
<span class="t" style="top:449.13px;font-size:24px;color:#000;right:1409.40px;line-height:24px;">Brutto</span>
<span class="t" style="top:449.13px;font-size:24px;color:#000;right:1267.40px;line-height:24px;">Netto</span>
<span class="t" style="top:449.13px;font-size:24px;color:#000;left:1265.60px;line-height:24px;">Status</span>
<svg style="left:637.5px;top:456.5px" width="19" height="10" viewBox="0 0 19 10"><path d="M0 10 L9.5 0 L19 10 Z" fill="#c6c6c6"/></svg>
<span class="t" style="top:492.88px;font-size:24px;color:#464646;left:422.10px;line-height:24px;">Basis</span>
<span class="t" style="top:492.88px;font-size:24px;color:#464646;left:674.10px;line-height:24px;">Basisfilter</span>
<span class="t" style="top:492.88px;font-size:24px;color:#464646;right:1403.40px;line-height:24px;">19796</span>
<span class="t" style="top:492.88px;font-size:24px;color:#464646;right:1261.40px;line-height:24px;">19609</span>
<span class="t" style="top:492.88px;font-size:24px;color:#464646;left:1262.10px;line-height:24px;">markiert</span>
<span class="t" style="top:530.88px;font-size:24px;color:#464646;left:454.60px;line-height:24px;">100</span>
<span class="t" style="top:530.88px;font-size:24px;color:#464646;left:674.10px;line-height:24px;">Testadressen</span>
<span class="t" style="top:530.88px;font-size:24px;color:#464646;right:1403.40px;line-height:24px;">3</span>
<span class="t" style="top:530.88px;font-size:24px;color:#464646;right:1261.40px;line-height:24px;">3</span>
<span class="t" style="top:530.88px;font-size:24px;color:#464646;left:1262.10px;line-height:24px;">markiert</span>
<span class="t" style="top:568.88px;font-size:24px;color:#464646;left:454.10px;line-height:24px;">DE</span>
<span class="t" style="top:568.88px;font-size:24px;color:#464646;left:674.10px;line-height:24px;">Deutsch</span>
<span class="t" style="top:568.88px;font-size:24px;color:#464646;right:1403.40px;line-height:24px;">19553</span>
<span class="t" style="top:568.88px;font-size:24px;color:#464646;right:1261.40px;line-height:24px;">19553</span>
<span class="t" style="top:568.88px;font-size:24px;color:#464646;left:1262.10px;line-height:24px;">markiert</span>
<span class="t" style="top:606.88px;font-size:24px;color:#464646;left:454.10px;line-height:24px;">FR</span>
<span class="t" style="top:606.88px;font-size:24px;color:#464646;left:674.10px;line-height:24px;">Französisch</span>
<span class="t" style="top:606.88px;font-size:24px;color:#464646;right:1403.40px;line-height:24px;">53</span>
<span class="t" style="top:606.88px;font-size:24px;color:#464646;right:1261.40px;line-height:24px;">53</span>
<span class="t" style="top:606.88px;font-size:24px;color:#464646;left:1262.10px;line-height:24px;">markiert</span>
<span class="t" style="top:644.88px;font-size:24px;color:#464646;left:454.10px;line-height:24px;">R</span>
<span class="t" style="top:644.88px;font-size:24px;color:#464646;left:674.10px;line-height:24px;">Rest</span>
<span class="t" style="top:644.88px;font-size:24px;color:#464646;right:1403.40px;line-height:24px;">187</span>
<span class="t" style="top:644.88px;font-size:24px;color:#464646;right:1261.40px;line-height:24px;">0</span>
<span class="t" style="top:644.88px;font-size:24px;color:#464646;left:1262.10px;line-height:24px;">markiert</span>
<svg style="left:394.5px;top:500px" width="11" height="11" viewBox="0 0 11 11"><path d="M11 0 L11 11 L0 11 Z" fill="#c2c2c2"/></svg>
<svg style="left:414.85px;top:569.9px" width="10" height="22" viewBox="0 0 10 22"><path d="M0 0 H9.2 V21.2 H3.2 V4.6 H0 Z" fill="#e73677"/></svg>
<div class="r" style="left:1484px;top:437px;width:6px;height:377.5px;background:#fff;"></div>
<div class="r" style="left:1485px;top:616px;width:4px;height:4px;background:#b4b4b4;"></div>
<div class="r" style="left:1485px;top:624px;width:4px;height:4px;background:#b4b4b4;"></div>
<div class="r" style="left:1485px;top:632px;width:4px;height:4px;background:#b4b4b4;"></div>
<div class="r" style="left:1490px;top:437px;width:1018px;height:377.5px;background:#cbcbcb;"></div>
<span class="t" style="top:439.13px;font-size:24px;color:#464646;left:1498.10px;line-height:24px;">Mailchimp</span>
<span class="t" style="top:439.13px;font-size:24px;color:#464646;left:1980.60px;font-style:italic;line-height:24px;">Status:</span>
<span class="t" style="top:439.13px;font-size:24px;color:#464646;left:2065.60px;font-weight:700;line-height:24px;">markiert</span>
<span class="t" style="top:439.13px;font-size:24px;color:#464646;left:2341.60px;font-weight:700;line-height:24px;">06.07.2022</span>
<div class="r" style="left:1498.2px;top:493.4px;width:767px;height:129.5px;border:1.6px solid #bcbcbc;border-radius:4px;background:#cecece;"></div>
<div class="r" style="left:1538.8px;top:473.8px;width:255.8px;height:34.4px;box-sizing:border-box;border:1.6px solid #c0c0c0;border-radius:18px;background:#f0f0f0;"></div>
<span class="t" style="top:480.42px;font-size:21px;color:#3c3c3c;left:1560.50px;letter-spacing:0.475px;line-height:21px;">Vorauswahl Personen</span>
<span class="t" style="top:517.38px;font-size:24px;color:#464646;left:1794.10px;font-weight:700;line-height:24px;">nur Personen ohne Personensperre</span>
<span class="t" style="top:549.13px;font-size:24px;color:#464646;right:729.90px;line-height:24px;">mit Adresse im Kanal:</span>
<span class="t" style="top:549.13px;font-size:24px;color:#464646;left:1794.10px;font-weight:700;line-height:24px;">E-Mail</span>
<span class="t" style="top:581.13px;font-size:24px;color:#464646;right:729.90px;line-height:24px;">bei Kanal-/Adresssperre:</span>
<span class="t" style="top:581.13px;font-size:24px;color:#464646;left:1794.10px;font-weight:700;line-height:24px;">nicht wählen</span>
<span class="t" style="top:626.63px;font-size:24px;color:#464646;left:1498.10px;line-height:24px;">Selektion:</span>
<span class="t" style="top:626.63px;font-size:24px;color:#464646;left:1637.60px;font-weight:700;line-height:24px;">jede Person</span>
<span class="t" style="top:658.63px;font-size:24px;color:#464646;left:1498.10px;line-height:24px;">Exportieren:</span>
<span class="t" style="top:658.63px;font-size:24px;color:#464646;left:1636.60px;font-weight:700;line-height:24px;">ja</span>
<span class="t" style="top:690.88px;font-size:24px;color:#464646;left:1497.60px;line-height:24px;">Tag:</span>
<span class="t" style="top:690.88px;font-size:24px;color:#464646;left:1637.60px;font-weight:700;line-height:24px;">202207-DE</span>
<div class="r" style="left:1490px;top:437px;width:1018px;height:377.5px;overflow:hidden;"><div class="r" style="left:8.2px;top:338.4px;width:983px;height:128px;border:1.6px solid #bcbcbc;border-radius:4px;background:#cecece;"></div><div class="r" style="left:48.8px;top:318.8px;width:110.2px;height:34.4px;box-sizing:border-box;border:1.6px solid #c0c0c0;border-radius:18px;background:#f0f0f0;"></div><span class="t" style="left:27px;top:361.28px;font-size:24px;line-height:24px;color:#464646">Maximal:</span></div>
<span class="t" style="top:762.62px;font-size:21px;color:#3c3c3c;left:1560.50px;letter-spacing:0.5px;line-height:21px;">Anzahl</span>
<div class="r" style="left:384px;top:885px;width:2124px;height:32px;background:#fff;"></div>
<span class="t" style="top:886.88px;font-size:24px;color:#3c3c3c;left:384.10px;line-height:24px;">Filterkriterien zu Segment: Basis.DE (1)</span>
<div class="r" style="left:384px;top:917px;width:2124px;height:44px;background:;background:linear-gradient(#fafafa 0%,#f4f4f4 35%,#e4e4e4 100%)"></div>
<div class="r" style="left:384px;top:961px;width:2124px;height:158px;background:#cbcbcb;"></div>
<div class="r" style="left:384px;top:961px;width:2124px;height:36px;background:#b4bbc5;"></div>
<div class="r" style="left:384px;top:961px;width:2124px;height:1.7px;background:#bdbdbd;"></div>
<div class="r" style="left:384.1px;top:962.7px;width:2px;height:156.3px;background:rgba(255,255,255,.36);"></div>
<div class="r" style="left:384.1px;top:917px;width:1px;height:44px;background:#dcdcdc;"></div>
<div class="r" style="left:385.1px;top:917px;width:1px;height:44px;background:#f3f3f3;"></div>
<div class="r" style="left:499.6px;top:962.7px;width:2px;height:156.3px;background:rgba(255,255,255,.36);"></div>
<div class="r" style="left:499.6px;top:917px;width:1px;height:44px;background:#dcdcdc;"></div>
<div class="r" style="left:500.6px;top:917px;width:1px;height:44px;background:#f3f3f3;"></div>
<div class="r" style="left:708.1px;top:962.7px;width:2px;height:156.3px;background:rgba(255,255,255,.36);"></div>
<div class="r" style="left:708.1px;top:917px;width:1px;height:44px;background:#dcdcdc;"></div>
<div class="r" style="left:709.1px;top:917px;width:1px;height:44px;background:#f3f3f3;"></div>
<div class="r" style="left:818.1px;top:962.7px;width:2px;height:156.3px;background:rgba(255,255,255,.36);"></div>
<div class="r" style="left:818.1px;top:917px;width:1px;height:44px;background:#dcdcdc;"></div>
<div class="r" style="left:819.1px;top:917px;width:1px;height:44px;background:#f3f3f3;"></div>
<div class="r" style="left:2387.6px;top:962.7px;width:2px;height:156.3px;background:rgba(255,255,255,.36);"></div>
<div class="r" style="left:2387.6px;top:917px;width:1px;height:44px;background:#dcdcdc;"></div>
<div class="r" style="left:2388.6px;top:917px;width:1px;height:44px;background:#f3f3f3;"></div>
<div class="r" style="left:2497.6px;top:962.7px;width:2px;height:156.3px;background:rgba(255,255,255,.36);"></div>
<div class="r" style="left:2497.6px;top:917px;width:1px;height:44px;background:#dcdcdc;"></div>
<div class="r" style="left:2498.6px;top:917px;width:1px;height:44px;background:#f3f3f3;"></div>
<div class="r" style="left:383.5px;top:996px;width:4px;height:2px;background:#cbcbcb;"></div>
<div class="r" style="left:499px;top:996px;width:4px;height:2px;background:#cbcbcb;"></div>
<div class="r" style="left:707.5px;top:996px;width:4px;height:2px;background:#cbcbcb;"></div>
<div class="r" style="left:817.5px;top:996px;width:4px;height:2px;background:#cbcbcb;"></div>
<div class="r" style="left:2387px;top:996px;width:4px;height:2px;background:#cbcbcb;"></div>
<div class="r" style="left:2497px;top:996px;width:4px;height:2px;background:#cbcbcb;"></div>
<div class="r" style="left:383.5px;top:1032.5px;width:4px;height:2px;background:#cbcbcb;"></div>
<div class="r" style="left:499px;top:1032.5px;width:4px;height:2px;background:#cbcbcb;"></div>
<div class="r" style="left:707.5px;top:1032.5px;width:4px;height:2px;background:#cbcbcb;"></div>
<div class="r" style="left:817.5px;top:1032.5px;width:4px;height:2px;background:#cbcbcb;"></div>
<div class="r" style="left:2387px;top:1032.5px;width:4px;height:2px;background:#cbcbcb;"></div>
<div class="r" style="left:2497px;top:1032.5px;width:4px;height:2px;background:#cbcbcb;"></div>
<div class="r" style="left:383.5px;top:1069px;width:4px;height:2px;background:#cbcbcb;"></div>
<div class="r" style="left:499px;top:1069px;width:4px;height:2px;background:#cbcbcb;"></div>
<div class="r" style="left:707.5px;top:1069px;width:4px;height:2px;background:#cbcbcb;"></div>
<div class="r" style="left:817.5px;top:1069px;width:4px;height:2px;background:#cbcbcb;"></div>
<div class="r" style="left:2387px;top:1069px;width:4px;height:2px;background:#cbcbcb;"></div>
<div class="r" style="left:2497px;top:1069px;width:4px;height:2px;background:#cbcbcb;"></div>
<div class="r" style="left:383.5px;top:1105px;width:4px;height:2px;background:#cbcbcb;"></div>
<div class="r" style="left:499px;top:1105px;width:4px;height:2px;background:#cbcbcb;"></div>
<div class="r" style="left:707.5px;top:1105px;width:4px;height:2px;background:#cbcbcb;"></div>
<div class="r" style="left:817.5px;top:1105px;width:4px;height:2px;background:#cbcbcb;"></div>
<div class="r" style="left:2387px;top:1105px;width:4px;height:2px;background:#cbcbcb;"></div>
<div class="r" style="left:2497px;top:1105px;width:4px;height:2px;background:#cbcbcb;"></div>
<span class="t" style="top:925.38px;font-size:24px;color:#000;left:420.10px;line-height:24px;">Pos.</span>
<span class="t" style="top:925.38px;font-size:24px;color:#000;left:512.10px;line-height:24px;">V</span>
<span class="t" style="top:925.38px;font-size:24px;color:#000;left:719.60px;line-height:24px;">(</span>
<span class="t" style="top:925.38px;font-size:24px;color:#000;left:830.10px;line-height:24px;">Bedingung</span>
<span class="t" style="top:925.38px;font-size:24px;color:#000;left:2399.10px;line-height:24px;">)</span>
<svg style="left:472px;top:933px" width="19" height="10" viewBox="0 0 19 10"><path d="M0 10 L9.5 0 L19 10 Z" fill="#c6c6c6"/></svg>
<span class="t" style="top:969.13px;font-size:24px;color:#464646;right:2015.40px;line-height:24px;">10</span>
<span class="t" style="top:969.13px;font-size:24px;color:#464646;left:826.10px;line-height:24px;">32: Erste Sprache: d</span>
<svg style="left:776.2px;top:970.1px" width="18" height="23" viewBox="0 0 18 23"><path d="M0.3 8.9 C0.3 3.2 3.6 0 8.6 0 C13.6 0 16.9 3 16.9 7.6 C16.9 10.8 15.2 12.9 12.6 15.2 L10.6 17.1 L17.1 17.1 L17.1 22.3 L0.2 22.3 L0.2 21.6 L9.6 11.6 C10.9 10.2 11.4 9.3 11.4 8 C11.4 6.2 10.3 5.2 8.6 5.2 C6.9 5.2 5.9 6.4 5.8 8.9 Z" fill="#e73677"/></svg>
</body></html>
